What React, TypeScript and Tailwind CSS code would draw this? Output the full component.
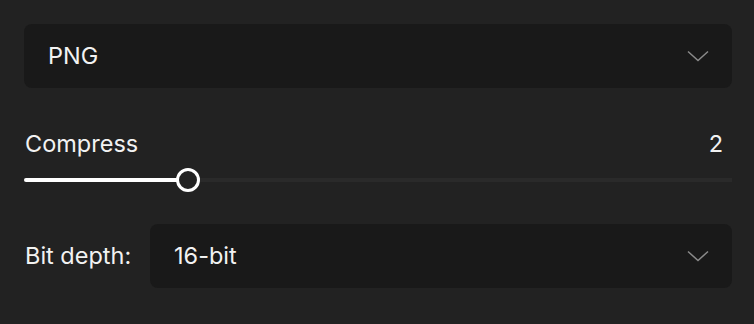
import React from "react";

function Chevron() {
  return (
    <svg width="22" height="12" viewBox="0 0 22 12" fill="none" className="shrink-0">
      <path d="M1 1.5 L11 10.5 L21 1.5" stroke="#8a8a8a" strokeWidth="1.5" />
    </svg>
  );
}

function SelectBox({ value, className = "" }: { value: string; className?: string }) {
  return (
    <div
      className={`flex h-16 items-center justify-between rounded-lg bg-[#191919] pl-6 pr-[23px] ${className}`}
    >
      <span className="text-[23.5px] leading-none text-[#f2f2f2]">{value}</span>
      <Chevron />
    </div>
  );
}

export default function App() {
  const pct = (188 - 24) / (732 - 24);
  return (
    <div
      className="min-h-[324px] w-full bg-[#222222] pl-6 pr-[22px] pt-6 pb-9 text-[#f2f2f2]"
      style={{ fontFamily: "Inter, 'Noto Sans', sans-serif" }}
    >
      <SelectBox value="PNG" />
      <div className="mt-[43px] flex items-center justify-between text-[23.5px] leading-[26px]">
        <span className="pl-px">Compress</span>
        <span className="pr-[9px]">2</span>
      </div>
      <div className="relative mt-[11px] flex h-6 items-center">
        <div className="h-1 w-full bg-[#2a2a2a]" />
        <div className="absolute left-0 h-1 rounded-l-full bg-white" style={{ width: `${pct * 100}%` }} />
        <div
          className="absolute h-6 w-6 -translate-x-1/2 rounded-full border-[3px] border-white bg-[#232323]"
          style={{ left: `${pct * 100}%` }}
        />
      </div>
      <div className="mt-[32px] flex items-center">
        <span className="w-[126px] shrink-0 pl-px text-[23.5px] leading-none">Bit depth:</span>
        <SelectBox value="16-bit" className="flex-1" />
      </div>
    </div>
  );
}
